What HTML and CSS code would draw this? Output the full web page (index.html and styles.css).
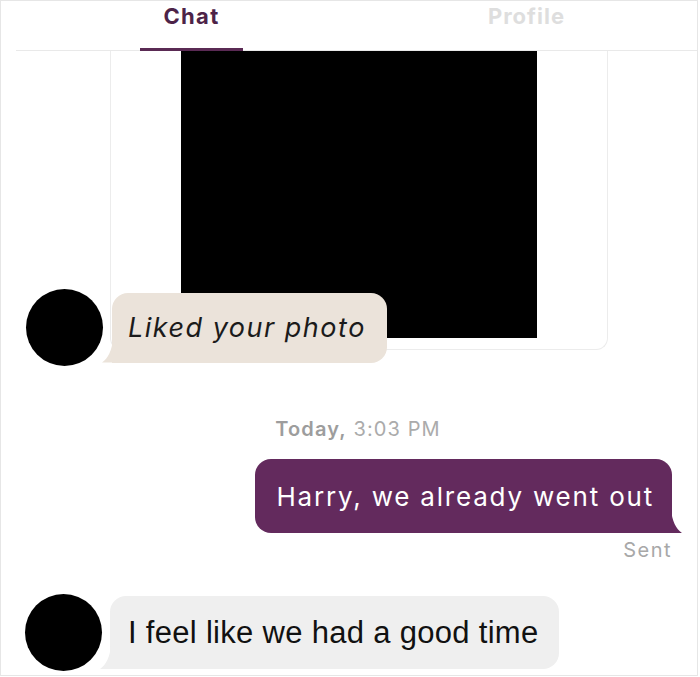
FILE: index.html
```html
<!DOCTYPE html>
<html lang="en">
<head>
<meta charset="utf-8">
<title>Chat</title>
<link rel="stylesheet" href="styles.css">
</head>
<body>
<div class="screen">
  <header class="tabs">
    <div class="tab tab-active">Chat</div>
    <div class="tab tab-idle">Profile</div>
  </header>
  <main class="thread">
    <div class="photo-card"><div class="photo"></div></div>
    <div class="row row-in row-liked">
      <div class="avatar"></div>
      <div class="bubble bubble-beige">Liked your photo</div>
    </div>
    <div class="stamp"><span class="stamp-day">Today,</span> 3:03 PM</div>
    <div class="row row-out">
      <div class="bubble bubble-purple">Harry, we already went out</div>
    </div>
    <div class="status">Sent</div>
    <div class="row row-in row-last">
      <div class="avatar"></div>
      <div class="bubble bubble-gray">I feel like we had a good time</div>
    </div>
  </main>
</div>
</body>
</html>
```

FILE: styles.css
```css
* { box-sizing: border-box; }
html, body { margin: 0; padding: 0; background: #fff; }
body { width: 700px; height: 677px; overflow: hidden; }

.screen {
  width: 698px;
  height: 676px;
  border: 1px solid #e6e6e6;
  overflow: hidden;
  background: #fff;
}

.tabs {
  display: flex;
  align-items: flex-start;
  height: 50px;
  margin-left: 15px;
  border-bottom: 1px solid #e9e9e9;
}
.tab {
  width: 103px;
  height: 50px;
  padding-top: 1px;
  text-align: center;
  font-family: Inter, "Open Sans", sans-serif;
  font-weight: 700;
  font-size: 22px;
  line-height: 28px;
}
.tab-active {
  margin-left: 124px;
  color: #4d2348;
  border-bottom: 3px solid #5a2a54;
  letter-spacing: 1.3px;
}
.tab-idle {
  margin-left: 232px;
  color: #dedede;
  letter-spacing: 1px;
}

.thread { display: flex; flex-direction: column; }

.photo-card {
  margin-left: 109px;
  width: 498px;
  height: 299px;
  border: 1px solid #ececec;
  border-top: none;
  border-radius: 0 0 12px 12px;
}
.photo {
  margin-left: 70px;
  width: 356px;
  height: 287px;
  background: #000;
}

.row { display: flex; align-items: center; }
.row-in { padding-left: 25px; }
.row-liked { margin-top: -61px; gap: 9px; }
.row-last { margin-top: 32px; padding-left: 24px; gap: 8px; }
.row-out { justify-content: flex-end; padding-right: 25px; margin-top: 18px; }

.avatar {
  width: 77px;
  height: 77px;
  border-radius: 50%;
  background: #000;
  flex: none;
}

.bubble {
  position: relative;
  display: flex;
  align-items: center;
  border-radius: 16px;
  white-space: nowrap;
}
.bubble::after {
  content: "";
  position: absolute;
  bottom: 0;
  width: 11px;
  height: 24px;
}

.bubble-beige {
  width: 275px;
  height: 70px;
  padding-left: 16px;
  background: #ebe3da;
  color: #1b1b1b;
  font-family: Inter, "Open Sans", sans-serif;
  font-style: italic;
  font-size: 27px;
  letter-spacing: 1.5px;
  border-bottom-left-radius: 0;
}
.bubble-beige::after {
  left: -10px;
  background: #ebe3da;
  clip-path: path('M11 0 C10 12 6 20 0 24 L11 24 Z');
}

.stamp {
  margin-top: 51px;
  padding-left: 18px;
  text-align: center;
  font-family: Inter, "Open Sans", sans-serif;
  font-size: 20px;
  line-height: 24px;
  letter-spacing: 1.1px;
  color: #ababab;
}
.stamp-day { font-weight: 600; color: #9d9d9d; }

.bubble-purple {
  height: 74px;
  padding: 0 18px 0 21px;
  background: #632a5d;
  color: #fff;
  font-family: Inter, "Open Sans", sans-serif;
  font-size: 26px;
  letter-spacing: 1.8px;
  border-bottom-right-radius: 0;
}
.bubble-purple::after {
  right: -10px;
  background: #632a5d;
  clip-path: path('M0 0 C1 12 5 20 11 24 L0 24 Z');
}

.status {
  margin-top: 5px;
  padding-right: 25px;
  text-align: right;
  font-family: Inter, "Open Sans", sans-serif;
  font-size: 20px;
  line-height: 24px;
  letter-spacing: 1.5px;
  color: #a8a8a8;
}

.bubble-gray {
  width: 449px;
  height: 73px;
  padding-left: 18px;
  background: #efefef;
  color: #111;
  font-family: "Liberation Sans", Arial, sans-serif;
  font-size: 31px;
  letter-spacing: 0.3px;
  border-bottom-left-radius: 0;
}
.bubble-gray::after {
  left: -10px;
  background: #efefef;
  clip-path: path('M11 0 C10 12 6 20 0 24 L11 24 Z');
}
```
